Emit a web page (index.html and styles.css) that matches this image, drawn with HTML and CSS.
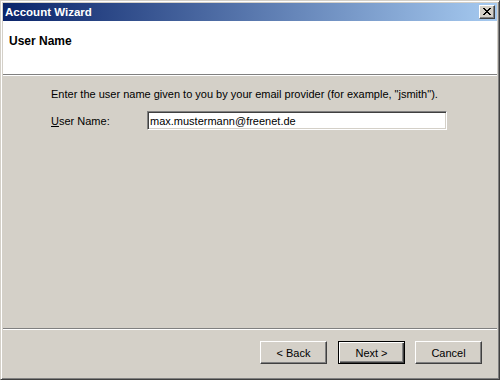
FILE: index.html
```html
<!DOCTYPE html>
<html lang="en">
<head>
  <meta charset="UTF-8">
  <title>Account Wizard</title>
  <link rel="stylesheet" href="styles.css">
</head>
<body>
  <div class="window">
    <div class="titlebar">
      <span class="title">Account Wizard</span>
      <button class="close" aria-label="Close">
        <svg width="8" height="7" viewBox="0 0 8 7" shape-rendering="crispEdges">
          <path d="M0 0h2v1H0zM6 0h2v1H6zM1 1h2v1H1zM5 1h2v1H5zM2 2h4v1H2zM3 3h2v1H3zM2 4h4v1H2zM1 5h2v1H1zM5 5h2v1H5zM0 6h2v1H0zM6 6h2v1H6z" fill="#000"/>
        </svg>
      </button>
    </div>

    <div class="header">
      <h1>User Name</h1>
    </div>
    <div class="rule"></div>

    <div class="content">
      <p>Enter the user name given to you by your email provider (for example, "jsmith").</p>
      <div class="field-row">
        <label for="username"><u>U</u>ser Name:</label>
        <input id="username" class="field" type="text" value="max.mustermann@freenet.de">
      </div>
    </div>
    <div class="rule"></div>

    <div class="footer">
      <button class="btn back">&lt; Back</button>
      <button class="btn default">Next &gt;</button>
      <button class="btn">Cancel</button>
    </div>
  </div>
</body>
</html>
```

FILE: styles.css
```css
body {
  margin: 0;
  background: #d4d0c8;
  font-family: "Liberation Sans", Arial, sans-serif;
  font-size: 11px;
  color: #000;
}
.window {
  width: 500px;
  height: 380px;
  box-sizing: border-box;
  border: 1px solid;
  border-color: #d4d0c8 #404040 #404040 #d4d0c8;
  box-shadow: inset 1px 1px #fff, inset -1px -1px #808080;
  padding: 2px;
  background: #d4d0c8;
  display: flex;
  flex-direction: column;
}
.titlebar {
  height: 18px;
  display: flex;
  align-items: center;
  padding: 0 2px;
  background: linear-gradient(to right, #0a246a, #a6caf0);
}
.title {
  color: #fff;
  font-weight: bold;
  font-size: 11.5px;
  line-height: 18px;
}
.close {
  margin-left: auto;
  width: 16px;
  height: 14px;
  padding: 0;
  box-sizing: border-box;
  background: #d4d0c8;
  border: 1px solid;
  border-color: #fff #404040 #404040 #fff;
  box-shadow: inset -1px -1px #808080;
  display: flex;
  align-items: center;
  justify-content: center;
}
.close svg {
  display: block;
  margin: 0 1px 1px 0;
}
.header {
  height: 53px;
  box-sizing: border-box;
  background: #fff;
  padding: 13px 6px 0;
}
.header h1 {
  margin: 0;
  font-size: 12px;
  line-height: 14px;
  font-weight: bold;
}
.rule {
  height: 0;
  border-top: 1px solid #808080;
  border-bottom: 1px solid #fff;
}
.content {
  flex: 1;
  padding: 12px 0 0 48px;
}
.content p {
  margin: 0;
  line-height: 13px;
}
.field-row {
  display: flex;
  align-items: center;
  margin-top: 10px;
}
.field-row label {
  width: 96px;
}
.field {
  width: 300px;
  height: 19px;
  box-sizing: border-box;
  margin: 0;
  padding: 0 2px;
  border: 1px solid;
  border-color: #808080 #fff #fff #808080;
  box-shadow: inset 1px 1px #404040, inset -1px -1px #d4d0c8;
  background: #fff;
  font-family: "Liberation Sans", Arial, sans-serif;
  font-size: 11px;
  color: #000;
  outline: none;
}
.footer {
  height: 47px;
  box-sizing: border-box;
  padding: 11px 15px 0 0;
  display: flex;
  justify-content: flex-end;
  align-items: flex-start;
  gap: 10px;
}
.btn {
  width: 67px;
  height: 23px;
  padding: 0;
  background: #d4d0c8;
  border: 1px solid;
  border-color: #fff #404040 #404040 #fff;
  box-shadow: inset -1px -1px #808080;
  font-family: "Liberation Sans", Arial, sans-serif;
  font-size: 11px;
  color: #000;
}
.btn.back {
  margin-right: 1px;
}
.btn.default {
  border-color: #000;
  box-shadow: inset 1px 1px #fff, inset -1px -1px #404040, inset -2px -2px #808080;
}
```
